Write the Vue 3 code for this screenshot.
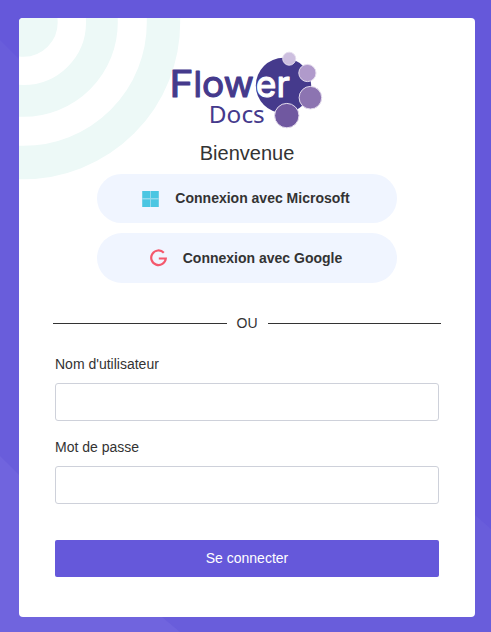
<script setup>
import { ref } from 'vue'

const username = ref('')
const password = ref('')
</script>

<template>
  <main class="page">
    <svg class="backdrop" viewBox="0 0 491 632" aria-hidden="true">
      <path d="M0 40 L475 515 L491 529 V632 H0Z" fill="#695ddb" />
      <path d="M0 456 L162 617 L180 632 H0Z" fill="#7064de" />
    </svg>
    <section class="card">
      <svg class="rings" viewBox="0 0 164 164" aria-hidden="true">
        <g fill="none" stroke="#edf9f7">
          <circle cx="4.500" cy="4.500" r="17.100" stroke-width="34.200" />
          <circle cx="4.500" cy="4.500" r="78.400" stroke-width="31.800" />
          <circle cx="4.500" cy="4.500" r="140" stroke-width="33.400" />
        </g>
      </svg>
      <header class="brand">
        <svg class="logo" viewBox="170 50 154 80" role="img" aria-label="Flower Docs">
          <circle cx="283.500" cy="85.500" r="27.700" fill="#453a8c" />
          <g class="word" fill="#453a8c" stroke="#453a8c">
            <text x="169.500" y="97" textLength="24" lengthAdjust="spacingAndGlyphs">F</text>
            <text class="tall" x="193.500" y="97">l</text>
            <text x="202" y="97" textLength="52" lengthAdjust="spacingAndGlyphs">ow</text>
          </g>
          <text class="word" x="255.800" y="97" fill="#fff" stroke="#fff" textLength="34" lengthAdjust="spacingAndGlyphs">er</text>
          <text class="sub" x="208.800" y="123" fill="#453a8c" stroke="#453a8c" textLength="56" lengthAdjust="spacingAndGlyphs">Docs</text>
          <g stroke="#e4dced" stroke-width="1">
            <circle cx="289.200" cy="58.700" r="6.500" fill="#cdbfdf" />
            <circle cx="307.400" cy="73" r="8.600" fill="#b09acb" />
            <circle cx="310.400" cy="97.700" r="11.300" fill="#8c74b1" />
            <circle cx="286.800" cy="115.600" r="12.200" fill="#7058a0" />
          </g>
        </svg>
        <h1>Bienvenue</h1>
      </header>
      <div class="providers">
        <button class="provider" type="button">
          <svg width="17" height="17" viewBox="0 0 17 17">
            <path d="M0 1h17v16H0z" fill="#93d9ec" />
            <path d="M.5 1H8v7H.5zM9 1h7.500v7H9zM.5 9.500H8V17H.5zM9 9.500h7.500V17H9z" fill="#4bc6e2" />
          </svg>
          <span>Connexion avec Microsoft</span>
        </button>
        <button class="provider google" type="button">
          <svg width="17" height="18" viewBox="0 0 17 18">
            <path d="M13.800 3.700A7.300 7.300 0 1 0 15.800 9.500H8.800" fill="none" stroke="#f4586d" stroke-width="2.200" />
          </svg>
          <span>Connexion avec Google</span>
        </button>
      </div>
      <div class="divider"><span>OU</span></div>
      <form @submit.prevent>
        <label for="username">Nom d'utilisateur</label>
        <input id="username" v-model="username" type="text" />
        <label for="password">Mot de passe</label>
        <input id="password" v-model="password" type="password" />
        <button class="submit" type="submit">Se connecter</button>
      </form>
    </section>
  </main>
</template>

<style>
body { margin: 0; }
</style>

<style scoped>
* { box-sizing: border-box; }
.page {
  position: relative;
  height: 632px;
  padding: 18px 16px 15px 19px;
  overflow: hidden;
  background: #6558da;
  color: #333;
  font-family: "Liberation Sans", Arial, sans-serif;
}
.backdrop { position: absolute; inset: 0; width: 491px; height: 632px; }
.card {
  position: relative;
  height: 599px;
  padding: 32px 34px 0;
  border-radius: 4px;
  background: #fff;
  overflow: hidden;
}
.rings { position: absolute; top: 0; left: 0; width: 164px; height: 164px; }
.brand { position: relative; display: flex; flex-direction: column; align-items: center; }
.logo { width: 154px; height: 80px; }
.word { font: 400 36.500px Inter, sans-serif; stroke-width: 1.100; stroke-linejoin: round; }
.tall { font-size: 35px; }
.sub { font: 400 24px "Noto Sans", sans-serif; stroke-width: 0; }
h1 { margin: 11px 0 0; font-size: 20px; font-weight: 400; line-height: 24px; }
.providers { display: flex; flex-direction: column; align-items: center; gap: 10px; margin-top: 9px; }
.provider {
  display: flex;
  align-items: center;
  justify-content: center;
  gap: 16px;
  width: 300px;
  height: 49px;
  padding: 0 2px 0 0;
  border: 0;
  border-radius: 25px;
  background: #f0f5ff;
  color: #333;
  font: 700 14px "Liberation Sans", Arial, sans-serif;
}
.provider:not(.google) { padding-bottom: 1px; }
.google { height: 50px; }
.divider {
  display: flex;
  align-items: center;
  gap: 10px;
  height: 20px;
  margin-top: 30px;
  font-size: 14px;
}
.divider::before, .divider::after { content: ""; flex: 1; height: 1px; background: #333; }
form { display: flex; flex-direction: column; padding: 21px 2px 0; }
label { height: 20px; font-size: 14px; line-height: 20px; }
input {
  width: 100%;
  height: 38px;
  margin: 9px 0 16px;
  border: 1px solid #ced1da;
  border-radius: 3px;
  background: #fff;
}
.submit {
  height: 37px;
  margin-top: 20px;
  padding: 0 0 2px;
  border: 0;
  border-radius: 2px;
  background: #6558da;
  color: #fff;
  font: 14px "Liberation Sans", Arial, sans-serif;
}
</style>
